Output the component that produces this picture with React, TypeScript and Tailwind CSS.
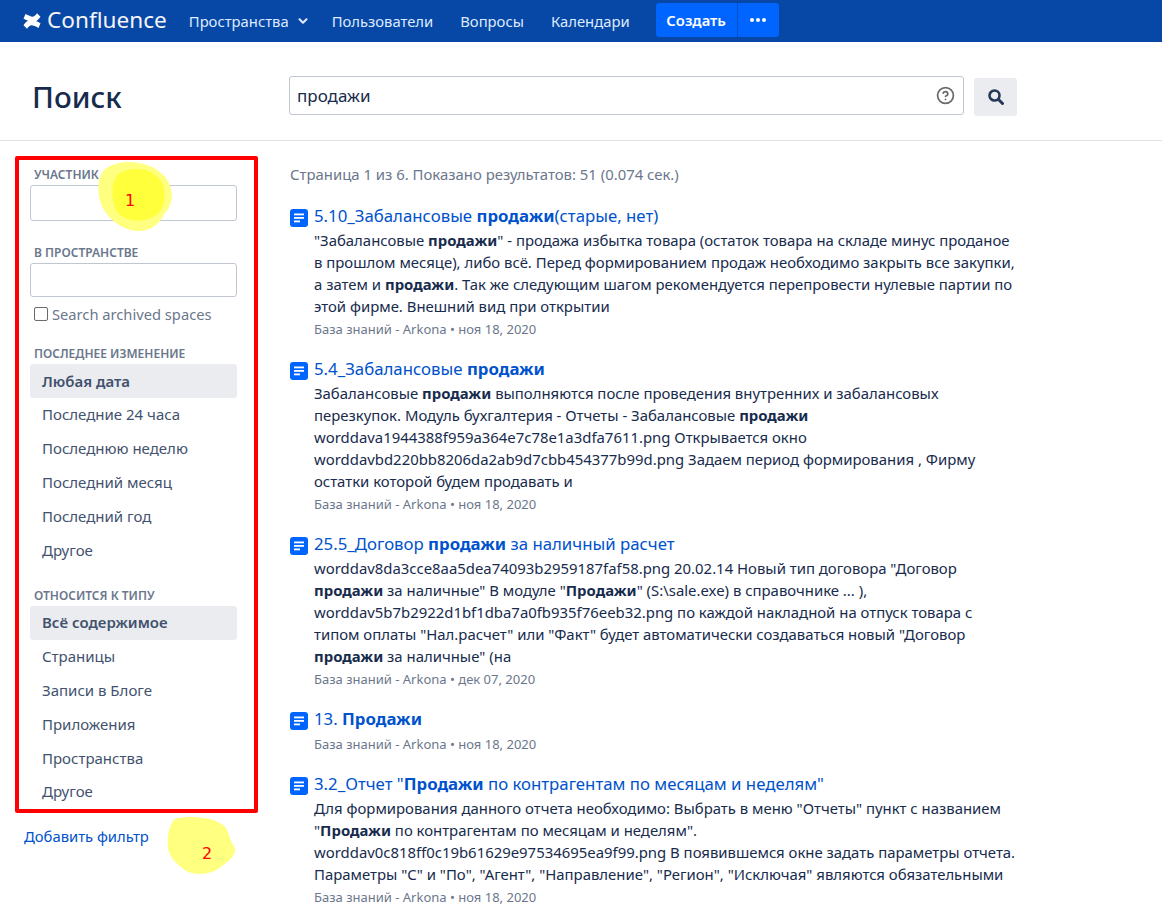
import React from "react";
import { ChevronDown, CircleHelp } from "lucide-react";

const dates = ["Любая дата", "Последние 24 часа", "Последнюю неделю", "Последний месяц", "Последний год", "Другое"];
const types = ["Всё содержимое", "Страницы", "Записи в Блоге", "Приложения", "Пространства", "Другое"];

const PageIcon = () => (
  <svg width="18" height="18" viewBox="0 0 18 18" className="shrink-0">
    <rect width="18" height="18" rx="3" fill="#0065FF" />
    <rect x="4" y="4.5" width="10" height="1.8" fill="#fff" />
    <rect x="4" y="8" width="10" height="1.8" fill="#fff" />
    <rect x="4" y="11.5" width="6" height="1.8" fill="#fff" />
  </svg>
);

const Logo = () => (
  <svg width="18" height="16" viewBox="0 0 18 16" fill="#fff">
    <path d="M0.5 12.3c2.5-3.6 4.6-5.2 8-5.2 2.4 0 5 1.2 9 3.2l-2 4.6c-3-1.4-5.4-2.6-7-2.6-1.4 0-3 1.3-4.5 3.4z" />
    <path d="M17.5 3.7c-2.5 3.6-4.6 5.2-8 5.2-2.4 0-5-1.2-9-3.2l2-4.6c3 1.4 5.4 2.6 7 2.6 1.4 0 3-1.3 4.5-3.4z" />
  </svg>
);

const Filter = ({ items, className }: { items: string[]; className?: string }) => (
  <div className={className}>
    {items.map((t, i) => (
      <div
        key={t}
        className={`h-[33.8px] rounded-[3px] px-3 flex items-center text-[15px] text-[#42526E] ${i === 0 ? "bg-[#EBECF0] font-semibold" : ""}`}
      >
        {t}
      </div>
    ))}
  </div>
);

const Label = ({ children, className }: { children: React.ReactNode; className?: string }) => (
  <div className={`text-[12px] leading-4 font-semibold text-[#6B778C] px-1 ${className ?? ""}`}>{children}</div>
);

const Result = ({ title, children, meta, className }: { title: React.ReactNode; children?: React.ReactNode; meta: string; className?: string }) => (
  <div className={`flex gap-[6px] ${className ?? ""}`}>
    <div className="pt-[6px]">
      <PageIcon />
    </div>
    <div className="whitespace-nowrap">
      <div className="text-[16.8px] leading-[26px] text-[#0052CC]">{title}</div>
      {children && <div className="text-[14.9px] leading-[22px] text-[#172B4D]">{children}</div>}
      <div className="mt-[1px] text-[13px] leading-[22px] text-[#6B778C]">{meta}</div>
    </div>
  </div>
);

export default function App() {
  return (
    <div className="relative w-[1162px] h-[924px] overflow-hidden bg-white font-['Noto_Sans',sans-serif]">
      {/* Top nav */}
      <header className="h-[42px] bg-[#0747A6] flex items-center pl-[23px] text-[14.8px] text-[#DEEBFF]">
        <Logo />
        <span className="ml-[6px] text-[22.6px] text-[#F4F5F7] -mt-[3px]">Confluence</span>
        <span className="ml-[22px] flex items-center gap-[7px]">
          Пространства <ChevronDown size={14} strokeWidth={3.5} />
        </span>
        <span className="ml-[22px]">Пользователи</span>
        <span className="ml-[27px]">Вопросы</span>
        <span className="ml-[27px]">Календари</span>
        <div className="ml-[26px] flex h-[34px] -mt-[2px] text-white">
          <div className="w-[82px] bg-[#0065FF] rounded-l-[3px] flex items-center justify-center font-semibold border-r border-[#0052CC]">
            Создать
          </div>
          <div className="w-[41px] bg-[#0065FF] rounded-r-[3px] flex items-center justify-center gap-[2px]">
            <i className="w-[4px] h-[4px] rounded-full bg-white" />
            <i className="w-[4px] h-[4px] rounded-full bg-white" />
            <i className="w-[4px] h-[4px] rounded-full bg-white" />
          </div>
        </div>
      </header>

      {/* Search bar */}
      <div className="h-[99px] border-b border-[#DFE1E6] flex items-start">
        <h1 className="ml-[32px] w-[257px] mt-[33px] text-[29.5px] leading-[44px] font-medium text-[#172B4D]">Поиск</h1>
        <div className="mt-[34px] w-[675px] h-[39px] border border-[#C1C7D0] rounded-[3px] flex items-center justify-between pl-[7px] pr-[8px] text-[17px] text-[#172B4D]">
          продажи
          <CircleHelp size={19} strokeWidth={2.2} className="text-[#6B6B6B]" />
        </div>
        <div className="mt-[36px] ml-[10px] w-[43px] h-[38px] rounded-[3px] bg-[#EBECF0] flex items-center justify-center">
          <svg width="16" height="16" viewBox="0 0 16 16" fill="none" stroke="#253858">
            <circle cx="6.5" cy="6.5" r="5" strokeWidth="2.6" />
            <path d="M10.5 10.5 14.5 14.5" strokeWidth="3" strokeLinecap="round" />
          </svg>
        </div>
      </div>

      <div className="flex items-start">
        {/* Filters */}
        <aside className="ml-[15px] mt-[15px] w-[275px]">
          <div className="w-[243px] h-[657px] border-[4px] border-[#FF0000] rounded-[2px] pt-[6px] pl-[11px] pr-[17px]">
            <Label className="mt-[1px]">УЧАСТНИК</Label>
            <div className="mt-[2px] h-[36px] border border-[#C1C7D0] rounded-[3px]" />
            <Label className="mt-[24px]">В ПРОСТРАНСТВЕ</Label>
            <div className="mt-[2px] h-[34px] border border-[#C1C7D0] rounded-[3px]" />
            <div className="mt-[6px] pl-[4px] h-[22px] flex items-center text-[14.7px] text-[#6B778C]">
              <span className="w-[14px] h-[14px] border border-[#6B6B6B] rounded-[2px] mr-[4px]" />
              Search archived spaces
            </div>
            <Label className="mt-[21px]">ПОСЛЕДНЕЕ ИЗМЕНЕНИЕ</Label>
            <Filter items={dates} className="mt-[2px]" />
            <Label className="mt-[21px]">ОТНОСИТСЯ К ТИПУ</Label>
            <Filter items={types} className="mt-[2px]" />
          </div>
          <div className="ml-[9px] mt-[12px] text-[14.8px] leading-[22px] text-[#0052CC]">Добавить фильтр</div>
        </aside>

        {/* Results */}
        <main className="mt-[22px] w-[730px]">
          <div className="text-[14.9px] leading-[22px] text-[#6B778C]">Страница 1 из 6. Показано результатов: 51 (0.074 сек.)</div>
          <Result
            className="mt-[18px]"
            title={<>5.10_Забалансовые <b>продажи</b>(старые, нет)</>}
            meta="База знаний - Arkona • ноя 18, 2020"
          >
            "Забалансовые <b>продажи</b>" - продажа избытка товара (остаток товара на складе минус проданое<br />
            в прошлом месяце), либо всё. Перед формированием продаж необходимо закрыть все закупки,<br />
            а затем и <b>продажи</b>. Так же следующим шагом рекомендуется перепровести нулевые партии по<br />
            этой фирме. Внешний вид при открытии
          </Result>
          <Result
            className="mt-[16px]"
            title={<>5.4_Забалансовые <b>продажи</b></>}
            meta="База знаний - Arkona • ноя 18, 2020"
          >
            Забалансовые <b>продажи</b> выполняются после проведения внутренних и забалансовых<br />
            перезкупок. Модуль бухгалтерия - Отчеты - Забалансовые <b>продажи</b><br />
            worddava1944388f959a364e7c78e1a3dfa7611.png Открывается окно<br />
            worddavbd220bb8206da2ab9d7cbb454377b99d.png Задаем период формирования , Фирму<br />
            остатки которой будем продавать и
          </Result>
          <Result
            className="mt-[16px]"
            title={<>25.5_Договор <b>продажи</b> за наличный расчет</>}
            meta="База знаний - Arkona • дек 07, 2020"
          >
            worddav8da3cce8aa5dea74093b2959187faf58.png 20.02.14 Новый тип договора "Договор<br />
            <b>продажи</b> за наличные" В модуле "<b>Продажи</b>" (S:\sale.exe) в справочнике ... ),<br />
            worddav5b7b2922d1bf1dba7a0fb935f76eeb32.png по каждой накладной на отпуск товара с<br />
            типом оплаты "Нал.расчет" или "Факт" будет автоматически создаваться новый "Договор<br />
            <b>продажи</b> за наличные" (на
          </Result>
          <Result
            className="mt-[16px]"
            title={<>13. <b>Продажи</b></>}
            meta="База знаний - Arkona • ноя 18, 2020"
          />
          <Result
            className="mt-[16px]"
            title={<>3.2_Отчет "<b>Продажи</b> по контрагентам по месяцам и неделям"</>}
            meta="База знаний - Arkona • ноя 18, 2020"
          >
            Для формирования данного отчета необходимо: Выбрать в меню "Отчеты" пункт с названием<br />
            "<b>Продажи</b> по контрагентам по месяцам и неделям".<br />
            worddav0c818ff0c19b61629e97534695ea9f99.png В появившемся окне задать параметры отчета.<br />
            Параметры "С" и "По", "Агент", "Направление", "Регион", "Исключая" являются обязательными
          </Result>
        </main>
      </div>

      {/* Marker annotations */}
      <svg className="absolute left-[98px] top-[160px] pointer-events-none" width="76" height="74" viewBox="0 0 76 74">
        <path d="M12 6C28-2 56 2 68 18c8 12 8 26-2 36-4 10-14 18-28 17C22 69 4 56 1 36-1 22 2 10 12 6z" fill="#FFFF80" />
        <path d="M22 13c16-8 36-4 43 12 3 14 2 27-12 33-14 5-28 3-35-8-5-12-6-30 4-37z" fill="#FFFF3C" />
      </svg>
      <svg className="absolute left-[167px] top-[816px] pointer-events-none" width="70" height="60" viewBox="0 0 70 60">
        <path d="M8 3C24-1 50 1 59 12c4 7 3 11 8 18 4 8-4 14-12 20-8 8-24 10-34 6C12 50 2 42 1 32 0 20 2 8 8 3z" fill="#FFFF80" />
      </svg>
      <span className="absolute left-[125px] top-[191px] text-[16px] leading-5 text-[#FF0000] font-['DejaVu_Sans',sans-serif]">1</span>
      <span className="absolute left-[202px] top-[844px] text-[16px] leading-5 text-[#FF0000] font-['DejaVu_Sans',sans-serif]">2</span>
    </div>
  );
}
